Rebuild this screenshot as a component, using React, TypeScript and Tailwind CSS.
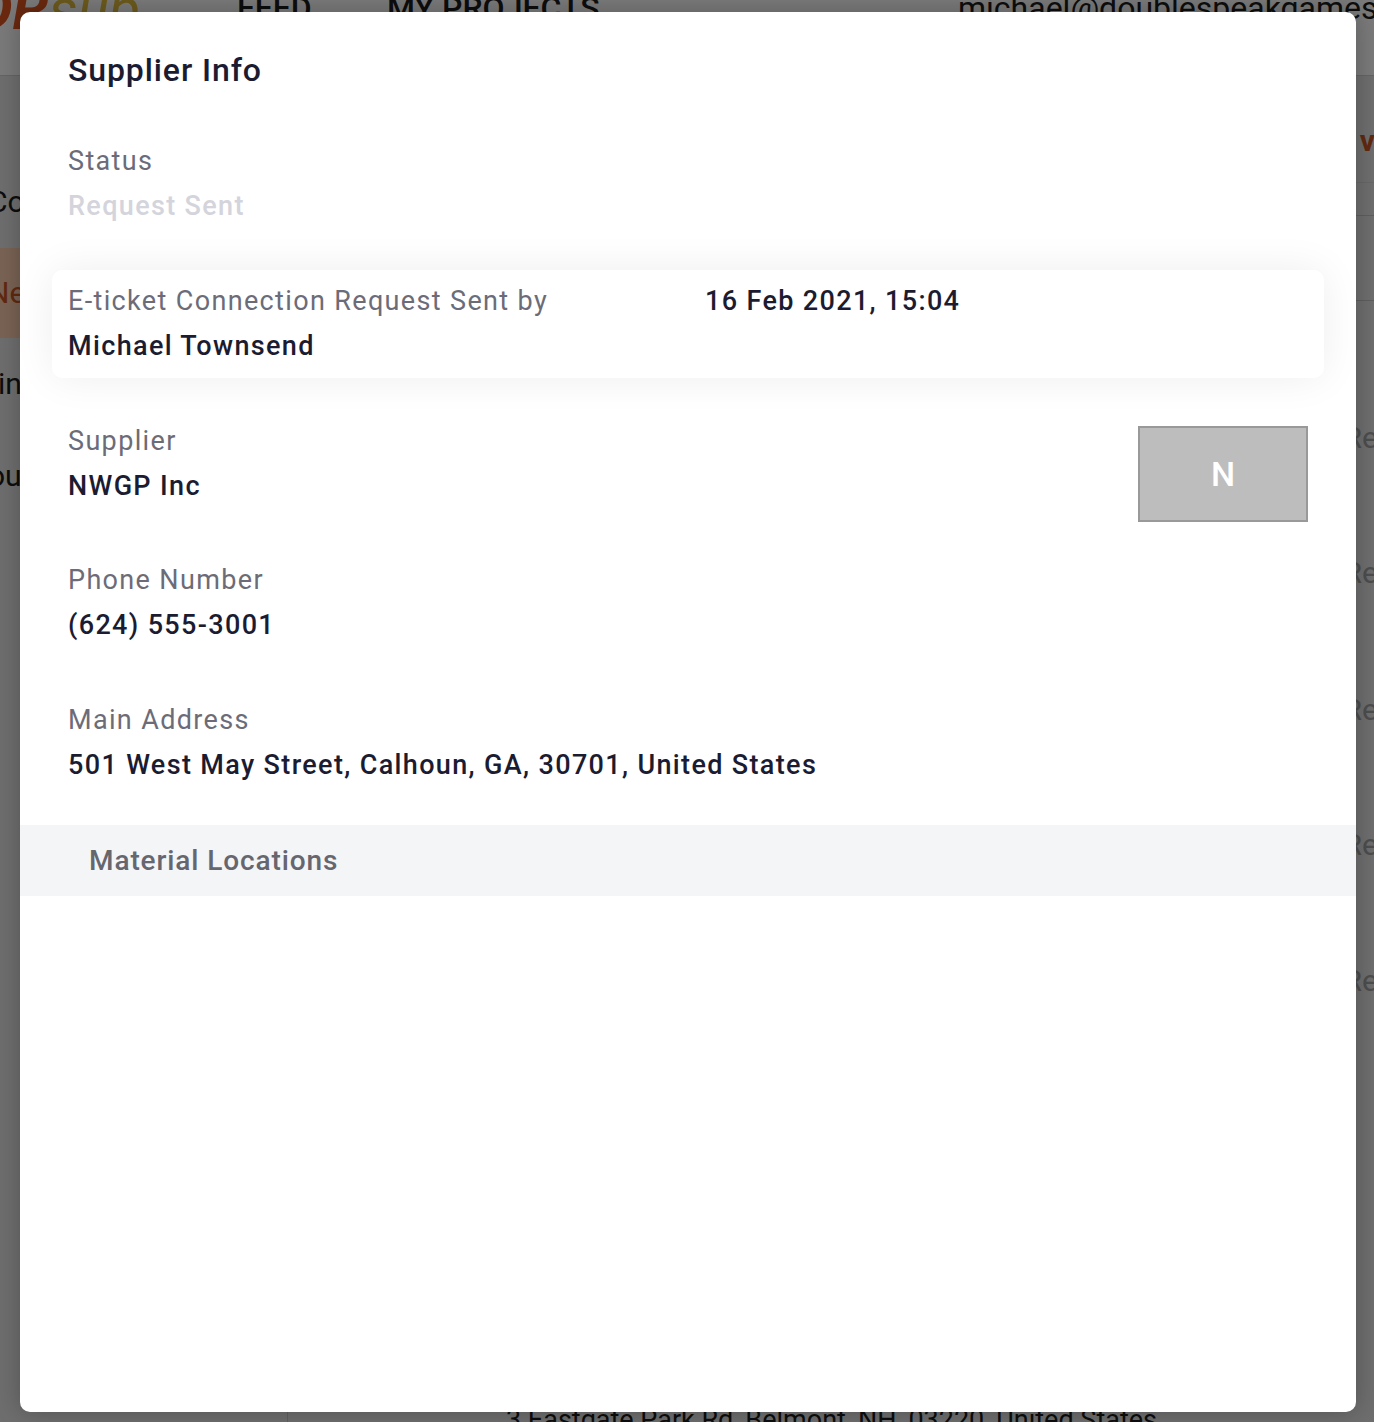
import React from "react";

function Label({ children }: { children: React.ReactNode }) {
  return <div className="text-[27px] leading-[45px] tracking-[1.35px] text-[#6c6c78]">{children}</div>;
}

function Value({ children, light }: { children: React.ReactNode; light?: boolean }) {
  return (
    <div
      className={
        "text-[27px] leading-[45px] tracking-[1.35px] font-medium " +
        (light ? "text-[#d4d4dc]" : "text-[#1b1c31]")
      }
    >
      {children}
    </div>
  );
}

export default function App() {
  return (
    <div
      className="relative w-[1374px] h-[1422px] overflow-hidden bg-[#dcdcdc]"
      style={{ fontFamily: "Roboto, 'Liberation Sans', sans-serif" }}
    >
      {/* Background page */}
      <div className="flex flex-col h-full">
        <header className="h-[76px] bg-[#f4f4f4] border-b border-[#c8c8c8] flex items-start">
          <div className="shrink-0 -mt-[20px] -ml-[24px] w-[261px] text-[58px] font-bold italic leading-none whitespace-nowrap">
            <span className="text-[#d4501e]">DR</span>
            <span className="text-[#d9b43a] font-normal">sup</span>
          </div>
          <div className="shrink-0 -mt-[8px] text-[32px] leading-none font-medium text-[#1a1a1a] w-[150px]">FEED</div>
          <div className="shrink-0 -mt-[8px] text-[32px] leading-none font-medium text-[#1a1a1a] w-[571px] whitespace-nowrap">MY PROJECTS</div>
          <div className="shrink-0 -mt-[8px] text-[32px] leading-none text-[#1a1a1a] whitespace-nowrap">
            michael@doublespeakgames.com
          </div>
        </header>
        <div className="flex flex-1">
          <aside className="shrink-0 w-[300px] border-r border-[#c0c0c0] flex flex-col -ml-[12px] text-[30px] text-[#1a1a1a] leading-[40px]">
            <div className="mt-[106px] whitespace-nowrap">Co</div>
            <div className="mt-[26px] h-[90px] bg-[#f2c6a8] text-[#c0521f] flex items-center">Ne</div>
            <div className="mt-[26px] ml-[10px]">in</div>
            <div className="mt-[52px]">ou</div>
          </aside>
          <main className="flex-1 flex flex-col">
            <div className="flex justify-end mt-[50px] text-[30px] font-bold text-[#c0521f] leading-none">
              <span className="-mr-[1px]">v</span>
            </div>
            <div className="mt-[26px] border-b border-[#cfcfcf]" />
            <div className="mt-[32px] border-b border-[#bdbdbd]" />
            <div className="mt-[84px] border-b border-[#bdbdbd]" />
            <div className="flex-1 flex flex-col items-end text-[30px] text-[#9a9a9a] leading-none">
              <span className="mt-[122px] -mr-[4px]">Re</span>
              <span className="mt-[105px] -mr-[4px]">Re</span>
              <span className="mt-[107px] -mr-[4px]">Re</span>
              <span className="mt-[105px] -mr-[4px]">Re</span>
              <span className="mt-[106px] -mr-[4px]">Re</span>
            </div>
            <div className="flex items-center h-[28px] mb-[-12px]">
              <div className="ml-[76px] w-[88px] h-[6px] bg-[#3a3a3a] mt-[12px]" />
              <div className="ml-[54px] text-[27px] text-[#1a1a1a] whitespace-nowrap">
                3 Eastgate Park Rd, Belmont, NH, 03220, United States
              </div>
            </div>
          </main>
        </div>
      </div>

      {/* Overlay */}
      <div className="absolute inset-0 bg-black/50 pt-[12px] pl-[20px]">
        <div className="w-[1336px] h-[1400px] bg-white rounded-[10px] shadow-[0_0_24px_rgba(0,0,0,0.25)] overflow-hidden flex flex-col">
          <div className="px-[48px] pt-[38px] flex flex-col">
            <h1 className="text-[32px] leading-[40px] tracking-[0.9px] font-medium text-[#1b1c31]">Supplier Info</h1>

            <div className="mt-[49px]">
              <Label>Status</Label>
              <Value light>Request Sent</Value>
            </div>

            <div className="mt-[41px] -mx-[16px] px-[16px] py-[9px] rounded-[10px] bg-white shadow-[0_0_40px_rgba(0,0,0,0.07)] flex">
              <div className="w-[637px]">
                <Label>E-ticket Connection Request Sent by</Label>
                <Value>Michael Townsend</Value>
              </div>
              <div>
                <Value>16 Feb 2021, 15:04</Value>
              </div>
            </div>

            <div className="mt-[41px] flex justify-between items-start">
              <div>
                <Label>Supplier</Label>
                <Value>NWGP Inc</Value>
              </div>
              <div className="mt-[7px] w-[170px] h-[96px] bg-[#bdbdbd] border-2 border-[#999999] flex items-center justify-center text-white text-[34px] font-medium">
                N
              </div>
            </div>

            <div className="mt-[36px]">
              <Label>Phone Number</Label>
              <Value>(624) 555-3001</Value>
            </div>

            <div className="mt-[50px]">
              <Label>Main Address</Label>
              <Value>501 West May Street, Calhoun, GA, 30701, United States</Value>
            </div>
          </div>

          <div className="mt-[37px] h-[71px] bg-[#f4f5f7] flex items-center pl-[69px]">
            <span className="text-[28px] tracking-[0.9px] font-medium text-[#66666f]">Material Locations</span>
          </div>
        </div>
      </div>
    </div>
  );
}
